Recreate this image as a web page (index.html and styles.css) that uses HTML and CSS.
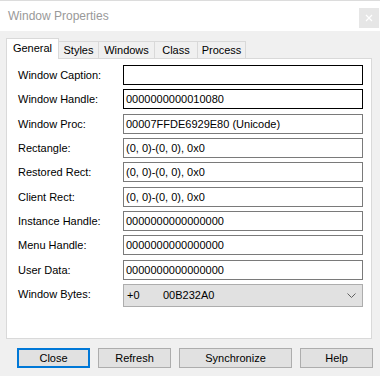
FILE: index.html
```html
<!DOCTYPE html>
<html>
<head>
<meta charset="utf-8">
<link rel="stylesheet" href="styles.css">
</head>
<body>
<div class="window">
  <div class="titlebar">
    <span class="title">Window Properties</span>
    <div class="closebtn">
      <svg width="8" height="8" viewBox="0 0 8 8"><path d="M1 1L7 7M7 1L1 7" stroke="#ffffff" stroke-width="1.2" fill="none"/></svg>
    </div>
  </div>
  <div class="client">
    <div class="tabs">
      <div class="tab sel t-general">General</div>
      <div class="tab t-styles">Styles</div>
      <div class="tab t-windows">Windows</div>
      <div class="tab t-class">Class</div>
      <div class="tab t-process">Process</div>
    </div>
    <div class="panel">
      <div class="form">
        <div class="label">Window Caption:</div><div class="field dark"></div>
        <div class="label">Window Handle:</div><div class="field dark">0000000000010080</div>
        <div class="label">Window Proc:</div><div class="field">00007FFDE6929E80 (Unicode)</div>
        <div class="label">Rectangle:</div><div class="field">(0, 0)-(0, 0), 0x0</div>
        <div class="label">Restored Rect:</div><div class="field">(0, 0)-(0, 0), 0x0</div>
        <div class="label">Client Rect:</div><div class="field">(0, 0)-(0, 0), 0x0</div>
        <div class="label">Instance Handle:</div><div class="field">0000000000000000</div>
        <div class="label">Menu Handle:</div><div class="field">0000000000000000</div>
        <div class="label">User Data:</div><div class="field">0000000000000000</div>
        <div class="label">Window Bytes:</div>
        <div class="combo">
          <span class="offset">+0</span><span class="value">00B232A0</span>
          <svg class="chev" width="9" height="5" viewBox="0 0 9 5"><path d="M0.5 0.5L4.5 4.5L8.5 0.5" stroke="#606060" stroke-width="1" fill="none"/></svg>
        </div>
      </div>
    </div>
    <div class="buttons">
      <div class="btn default w73">Close</div>
      <div class="btn w73">Refresh</div>
      <div class="btn w113">Synchronize</div>
      <div class="btn w73">Help</div>
    </div>
  </div>
</div>
</body>
</html>
```
FILE: styles.css
```css
html, body {
  margin: 0;
  padding: 0;
}
body {
  width: 380px;
  height: 376px;
  overflow: hidden;
  background: #f0f0f0;
  font-family: "Liberation Sans", Arial, sans-serif;
  font-size: 11px;
  color: #000;
}
.window {
  width: 380px;
  height: 376px;
}
.titlebar {
  height: 30px;
  border-top: 1px solid #dcdcdc;
  background: #ffffff;
  display: flex;
  align-items: flex-start;
  box-sizing: content-box;
}
.title {
  font-size: 12px;
  color: #999999;
  margin-left: 8px;
  margin-top: 7px;
  line-height: 16px;
}
.closebtn {
  margin-left: auto;
  margin-right: 1px;
  margin-top: 7px;
  width: 20px;
  height: 20px;
  background: #e6e6e6;
  display: flex;
  align-items: center;
  justify-content: center;
}
.client {
  padding: 7px 0 0 6px;
}
.tabs {
  display: flex;
  align-items: flex-start;
  height: 20px;
}
.tab {
  box-sizing: border-box;
  border: 1px solid #d9d9d9;
  border-bottom: none;
  background: #f0f0f0;
  height: 17px;
  margin-top: 3px;
  margin-left: -1px;
  display: flex;
  align-items: center;
  justify-content: center;
  line-height: 13px;
}
.tab.sel {
  position: relative;
  z-index: 1;
  background: #ffffff;
  height: 21px;
  margin-top: 0;
  margin-left: 0;
  padding-bottom: 1px;
}
.t-general { width: 53px; }
.t-styles { width: 41px; }
.t-windows { width: 57px; }
.t-class { width: 44px; }
.t-process { width: 49px; }
.panel {
  box-sizing: border-box;
  width: 366px;
  height: 281px;
  border: 1px solid #d9d9d9;
  background: #ffffff;
  padding: 6px 0 0 11px;
}
.form {
  display: grid;
  grid-template-columns: 105px 240px;
  grid-template-rows: repeat(9, 20px) 23px;
  row-gap: 4.33px;
}
.label {
  display: flex;
  align-items: center;
  height: 20px;
}
.field {
  box-sizing: border-box;
  height: 20px;
  border: 1px solid #7a7a7a;
  background: #ffffff;
  padding: 0 2px;
  display: flex;
  align-items: center;
  white-space: nowrap;
}
.field.dark {
  border-color: #000000;
}
.combo {
  box-sizing: border-box;
  height: 23px;
  border: 1px solid #adadad;
  background: #e1e1e1;
  display: flex;
  align-items: center;
  padding-left: 3px;
}
.offset {
  width: 36px;
}
.chev {
  margin-left: auto;
  margin-right: 6px;
}
.buttons {
  display: flex;
  gap: 8px;
  margin-top: 9px;
  padding-left: 11px;
}
.btn {
  box-sizing: border-box;
  height: 20px;
  border: 1px solid #adadad;
  background: #e1e1e1;
  display: flex;
  align-items: center;
  justify-content: center;
}
.btn.default {
  border: 2px solid #0078d7;
}
.w73 { width: 73px; }
.w113 { width: 113px; }
```
